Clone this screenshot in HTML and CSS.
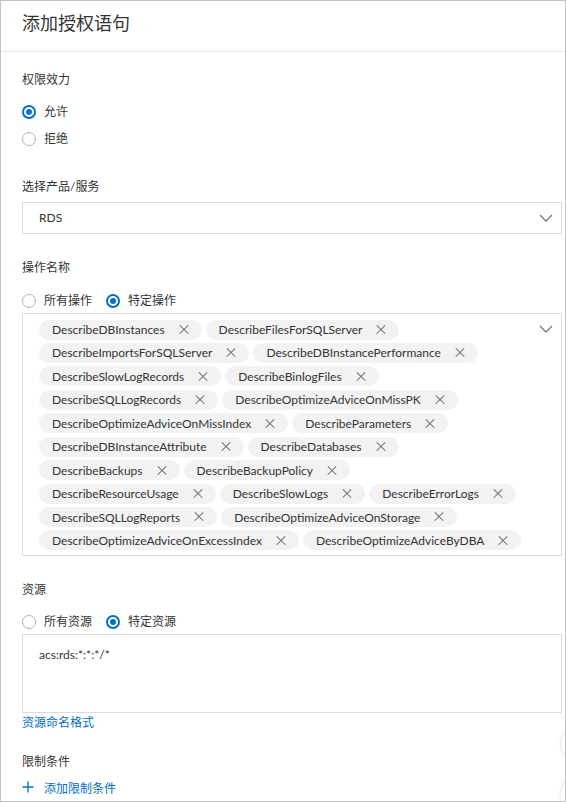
FILE: index.html
```html
<!DOCTYPE html>
<html lang="zh-CN">
<head>
<meta charset="utf-8">
<title>添加授权语句</title>
<link rel="stylesheet" href="styles.css">
</head>
<body>
<div class="panel">
  <header class="panel-header">
    <h1 class="panel-title">添加授权语句</h1>
  </header>
  <main class="panel-body">
    <section class="field field-effect">
      <div class="field-label">权限效力</div>
      <div class="radio-col">
        <label class="radio checked"><span class="radio-dot"></span><span class="radio-text">允许</span></label>
        <label class="radio"><span class="radio-dot"></span><span class="radio-text">拒绝</span></label>
      </div>
    </section>

    <section class="field field-product">
      <div class="field-label">选择产品/服务</div>
      <div class="select">
        <span class="select-value">RDS</span>
        <svg class="chevron" width="14" height="8" viewBox="0 0 14 8"><path d="M1 1 L7 7 L13 1" fill="none" stroke="#777" stroke-width="1.3"/></svg>
      </div>
    </section>

    <section class="field field-action">
      <div class="field-label">操作名称</div>
      <div class="radio-row">
        <label class="radio"><span class="radio-dot"></span><span class="radio-text">所有操作</span></label>
        <label class="radio checked"><span class="radio-dot"></span><span class="radio-text">特定操作</span></label>
      </div>
      <div class="tag-box">
        <div class="tags">
          <span class="tag">DescribeDBInstances<i class="tag-x"></i></span>
          <span class="tag">DescribeFilesForSQLServer<i class="tag-x"></i></span>
          <span class="tag">DescribeImportsForSQLServer<i class="tag-x"></i></span>
          <span class="tag">DescribeDBInstancePerformance<i class="tag-x"></i></span>
          <span class="tag">DescribeSlowLogRecords<i class="tag-x"></i></span>
          <span class="tag">DescribeBinlogFiles<i class="tag-x"></i></span>
          <span class="tag">DescribeSQLLogRecords<i class="tag-x"></i></span>
          <span class="tag">DescribeOptimizeAdviceOnMissPK<i class="tag-x"></i></span>
          <span class="tag">DescribeOptimizeAdviceOnMissIndex<i class="tag-x"></i></span>
          <span class="tag">DescribeParameters<i class="tag-x"></i></span>
          <span class="tag">DescribeDBInstanceAttribute<i class="tag-x"></i></span>
          <span class="tag">DescribeDatabases<i class="tag-x"></i></span>
          <span class="tag">DescribeBackups<i class="tag-x"></i></span>
          <span class="tag">DescribeBackupPolicy<i class="tag-x"></i></span>
          <span class="tag">DescribeResourceUsage<i class="tag-x"></i></span>
          <span class="tag">DescribeSlowLogs<i class="tag-x"></i></span>
          <span class="tag">DescribeErrorLogs<i class="tag-x"></i></span>
          <span class="tag">DescribeSQLLogReports<i class="tag-x"></i></span>
          <span class="tag">DescribeOptimizeAdviceOnStorage<i class="tag-x"></i></span>
          <span class="tag">DescribeOptimizeAdviceOnExcessIndex<i class="tag-x"></i></span>
          <span class="tag">DescribeOptimizeAdviceByDBA<i class="tag-x"></i></span>
        </div>
        <svg class="chevron" width="14" height="8" viewBox="0 0 14 8"><path d="M1 1 L7 7 L13 1" fill="none" stroke="#777" stroke-width="1.3"/></svg>
      </div>
    </section>

    <section class="field field-resource">
      <div class="field-label">资源</div>
      <div class="radio-row">
        <label class="radio"><span class="radio-dot"></span><span class="radio-text">所有资源</span></label>
        <label class="radio checked"><span class="radio-dot"></span><span class="radio-text">特定资源</span></label>
      </div>
      <div class="textarea">acs:rds:*:*:*/*</div>
      <a class="link" href="#">资源命名格式</a>
    </section>

    <section class="field field-condition">
      <div class="field-label">限制条件</div>
      <a class="add-link" href="#">
        <svg class="plus" width="12" height="12" viewBox="0 0 12 12"><path d="M6 0.5 V11.5 M0.5 6 H11.5" stroke="#0070cc" stroke-width="1.3" fill="none"/></svg>
        <span>添加限制条件</span>
      </a>
    </section>
  </main>
  <div class="float-btn float-btn-1"></div>
  <div class="float-btn float-btn-2"></div>
</div>
</body>
</html>
```
FILE: styles.css
```css
* { box-sizing: border-box; }
html, body { margin: 0; padding: 0; background: #fff; }
body {
  font-family: "Lato", "Noto Sans CJK SC", sans-serif;
  font-size: 12px;
  color: #333;
}
.panel {
  position: relative;
  width: 566px;
  height: 802px;
  border: 1px solid #c4c4c4;
  overflow: hidden;
}
.panel-header {
  height: 51px;
  border-bottom: 1px solid #e5e5e5;
  padding: 10px 0 0 21px;
}
.panel-title {
  margin: 0;
  font-size: 18px;
  line-height: 24px;
  font-weight: normal;
  color: #333;
}
.panel-body {
  padding: 0 3px 0 21px;
}
.field-label {
  line-height: 20px;
  color: #333;
}
.field-effect { padding-top: 18px; }
.field-product { padding-top: 28px; }
.field-action { padding-top: 24px; }
.field-resource { padding-top: 24px; }
.field-condition { padding-top: 19px; }

.radio-col {
  display: flex;
  flex-direction: column;
  gap: 7.5px;
  margin-top: 11.5px;
}
.radio-row {
  display: flex;
  gap: 14px;
  margin-top: 12.5px;
}
.radio {
  display: flex;
  align-items: center;
  gap: 8px;
  height: 20px;
  line-height: 20px;
  cursor: pointer;
}
.radio-dot {
  width: 14px;
  height: 14px;
  border-radius: 50%;
  border: 1px solid #b3b3b3;
  background: #fff;
  display: flex;
  align-items: center;
  justify-content: center;
  flex: none;
}
.radio.checked .radio-dot {
  border: 2px solid #0070cc;
}
.radio.checked .radio-dot::after {
  content: "";
  width: 6px;
  height: 6px;
  border-radius: 50%;
  background: #0070cc;
}

.select {
  margin-top: 5px;
  height: 32px;
  border: 1px solid #dcdcdc;
  display: flex;
  align-items: center;
  justify-content: space-between;
  padding: 0 8px 0 16px;
}
.select-value { line-height: 20px; }

.tag-box {
  margin-top: 2px;
  border: 1px solid #dcdcdc;
  display: flex;
  align-items: flex-start;
  padding: 6px 8px 4px 16px;
  min-height: 243px;
}
.tag-box .chevron { margin-top: 5px; flex: none; }
.tags {
  flex: 1;
  display: flex;
  flex-wrap: wrap;
  column-gap: 4px;
  row-gap: 3.45px;
  padding-right: 14px;
}
.tag {
  display: inline-flex;
  align-items: center;
  height: 20px;
  padding: 0 13px 0 13px;
  border-radius: 10px;
  background: #f2f2f2;
  color: #333;
  white-space: nowrap;
}
.tag-x {
  position: relative;
  width: 10px;
  height: 10px;
  margin-left: 14px;
  flex: none;
}
.tag-x::before, .tag-x::after {
  content: "";
  position: absolute;
  left: -1px;
  top: 4.4px;
  width: 12px;
  height: 1.2px;
  background: #6e6e6e;
}
.tag-x::before { transform: rotate(45deg); }
.tag-x::after { transform: rotate(-45deg); }

.textarea {
  margin-top: 2px;
  height: 79px;
  border: 1px solid #dcdcdc;
  padding: 10px 16px;
  line-height: 20px;
}
.link {
  display: block;
  line-height: 20px;
  color: #0070cc;
  text-decoration: none;
}
.add-link {
  margin-top: 5px;
  display: flex;
  align-items: center;
  gap: 10px;
  height: 20px;
  color: #0070cc;
  text-decoration: none;
}
.plus { flex: none; }

.float-btn {
  position: absolute;
  left: 559px;
  width: 34px;
  height: 34px;
  border-radius: 50%;
  background: #fff;
  box-shadow: 0 0 2px rgba(0,0,0,0.12);
  border: 1px solid #efefef;
}
.float-btn-1 { top: 726px; }
.float-btn-2 { top: 776px; }
```
